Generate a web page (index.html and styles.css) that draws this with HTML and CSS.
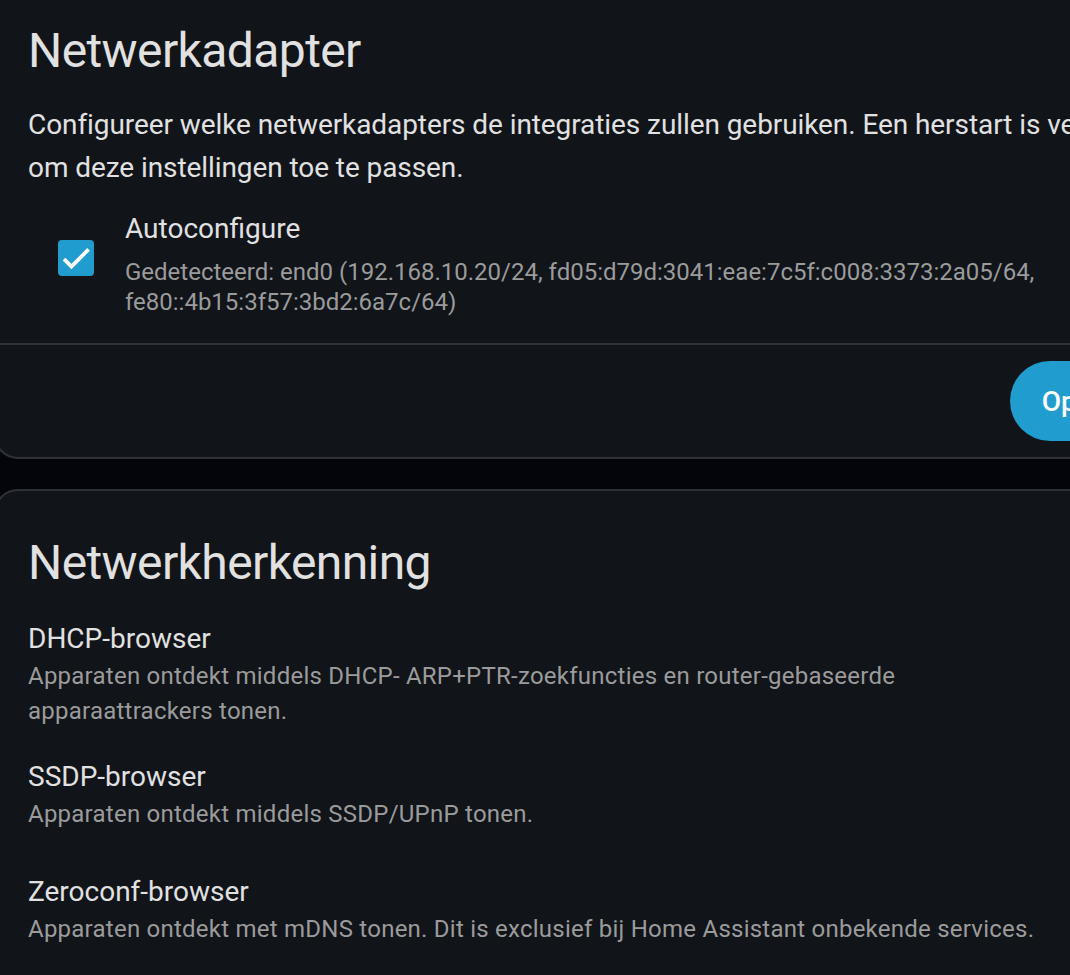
FILE: index.html
```html
<!DOCTYPE html>
<html lang="nl">
<head>
<meta charset="utf-8">
<title>Netwerk</title>
<link rel="stylesheet" href="styles.css">
</head>
<body>
<div class="page">
  <section class="card">
    <h1 class="card-header">Netwerkadapter</h1>
    <div class="card-content">
      <p class="desc">Configureer welke netwerkadapters de integraties zullen gebruiken. Een herstart is vereist om deze instellingen toe te passen.</p>
      <div class="formfield">
        <span class="checkbox">
          <svg viewBox="0 0 24 24" class="check"><path d="M1.73,12.91 8.1,19.28 22.79,4.59" fill="none" stroke="#ffffff" stroke-width="3.2"/></svg>
        </span>
        <span class="field-text">
          <span class="field-label">Autoconfigure</span>
          <span class="field-secondary">Gedetecteerd: end0 (192.168.10.20/24, fd05:d79d:3041:eae:7c5f:c008:3373:2a05/64, fe80::4b15:3f57:3bd2:6a7c/64)</span>
        </span>
      </div>
    </div>
    <div class="card-actions">
      <button class="btn">Opslaan</button>
    </div>
  </section>

  <section class="card">
    <h1 class="card-header">Netwerkherkenning</h1>
    <div class="card-content rows">
      <div class="row">
        <div class="row-text">
          <div class="row-heading">DHCP-browser</div>
          <div class="row-desc">Apparaten ontdekt middels DHCP- ARP+PTR-zoekfuncties en router-gebaseerde apparaattrackers tonen.</div>
        </div>
        <span class="switch"><span class="thumb"></span></span>
      </div>
      <div class="row">
        <div class="row-text">
          <div class="row-heading">SSDP-browser</div>
          <div class="row-desc">Apparaten ontdekt middels SSDP/UPnP tonen.</div>
        </div>
        <span class="switch"><span class="thumb"></span></span>
      </div>
      <div class="row">
        <div class="row-text">
          <div class="row-heading">Zeroconf-browser</div>
          <div class="row-desc">Apparaten ontdekt met mDNS tonen. Dit is exclusief bij Home Assistant onbekende services.</div>
        </div>
        <span class="switch"><span class="thumb"></span></span>
      </div>
    </div>
  </section>
</div>
</body>
</html>
```

FILE: styles.css
```css
html, body {
  margin: 0;
  padding: 0;
  background: #03050a;
  overflow: hidden;
  height: 100%;
}

body {
  font-family: Roboto, "Noto Sans", sans-serif;
  color: #e1e1e1;
}

.page {
  display: flex;
  flex-direction: column;
  gap: 30px;
  margin: -23px 0 0 -6px;
}

.card {
  flex-shrink: 0;
  width: 1200px;
  box-sizing: border-box;
  background: #111418;
  border: 2px solid #2e3135;
  border-radius: 24px;
}

.card-header {
  margin: 0;
  padding: 24px 32px 0;
  font-size: 48px;
  line-height: 96px;
  font-weight: 400;
  color: #e1e1e1;
  letter-spacing: -0.6px;
}

.card-content {
  padding: 0 32px 26px;
}

.desc {
  margin: 4px 0 0;
  font-size: 28px;
  line-height: 43px;
  color: #e1e1e1;
  letter-spacing: -0.08px;
}

.formfield {
  display: flex;
  align-items: center;
  margin-top: 20px;
}

.checkbox {
  flex-shrink: 0;
  width: 36px;
  height: 36px;
  margin-left: 30px;
  margin-right: 31px;
  margin-top: -10px;
  border-radius: 4px;
  background: #219cce;
  display: flex;
  align-items: center;
  justify-content: center;
}

.check {
  width: 28px;
  height: 28px;
}

.field-text {
  display: flex;
  flex-direction: column;
}

.field-label {
  font-size: 28px;
  line-height: 40px;
  color: #e1e1e1;
}

.field-secondary {
  margin-top: 8px;
  font-size: 24px;
  line-height: 30px;
  color: #9b9b9b;
}

.card-actions {
  border-top: 2px solid #2e3135;
  padding: 16px;
  display: flex;
  justify-content: flex-end;
}

.btn {
  height: 80px;
  padding: 0 32px;
  border: none;
  border-radius: 40px;
  background: #219cce;
  color: #ffffff;
  font-family: Roboto, "Noto Sans", sans-serif;
  font-size: 28px;
  font-weight: 500;
}

.rows {
  padding-bottom: 32px;
}

.row {
  display: flex;
  align-items: center;
  gap: 24px;
  min-height: 115px;
  padding: 8px 0;
  box-sizing: border-box;
}

.row-text {
  flex: 1;
  min-width: 0;
}

.row-heading {
  font-size: 28px;
  line-height: 40px;
  color: #e1e1e1;
}

.row-desc {
  font-size: 24px;
  line-height: 35px;
  color: #9b9b9b;
  letter-spacing: 0.24px;
}

.switch {
  position: relative;
  flex-shrink: 0;
  width: 72px;
  height: 28px;
  border-radius: 14px;
  background: #219cce;
  opacity: 0.9;
}

.thumb {
  position: absolute;
  right: -4px;
  top: -6px;
  width: 40px;
  height: 40px;
  border-radius: 50%;
  background: #219cce;
}
```
